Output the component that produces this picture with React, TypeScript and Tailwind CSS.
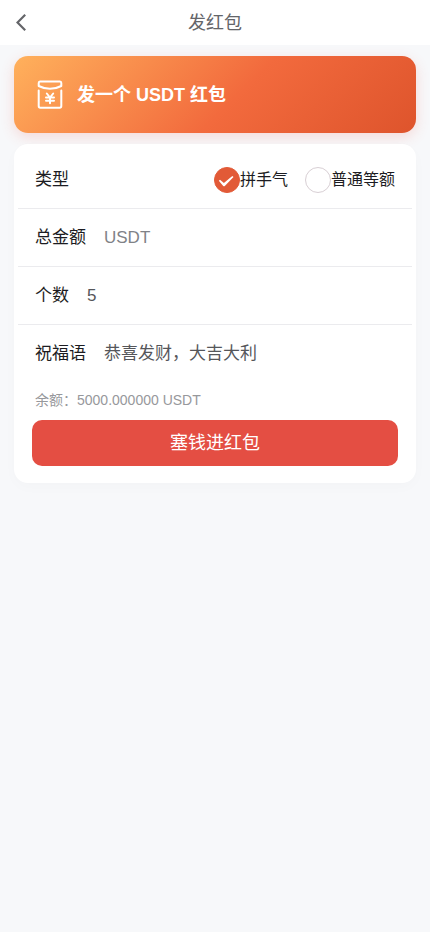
import { useState } from "react";
import type { InputHTMLAttributes } from "react";

type PacketType = "lucky" | "equal";

const TYPES: { value: PacketType; label: string }[] = [
  { value: "lucky", label: "拼手气" },
  { value: "equal", label: "普通等额" },
];

function BackIcon() {
  return (
    <svg
      viewBox="0 0 12 18"
      className="h-[18px] w-3"
      fill="none"
      stroke="currentColor"
      strokeWidth="2.2"
      aria-hidden="true"
    >
      <path d="M9.200 .8 1.500 8.500l7.700 7.700" />
    </svg>
  );
}

function PacketIcon() {
  return (
    <svg
      viewBox="0 0 26 30"
      className="h-[30px] w-[26px] shrink-0"
      fill="none"
      stroke="currentColor"
      strokeWidth="2"
      strokeLinecap="round"
      strokeLinejoin="round"
      aria-hidden="true"
    >
      <path d="M3 1.500h20q1.300 0 1.300 1.500v3Q19 8.800 13 8.800T1.700 6V3Q1.700 1.500 3 1.500Z" />
      <path d="M1.700 10.500v15.500q0 1.700 1.600 1.700h19.400q1.600 0 1.600-1.700V10.500" />
      <path d="m9.800 13.500 3.200 4 3.200-4M9 17.500h8M9 20.700h8M13 17.500v5.800" />
    </svg>
  );
}

type FieldProps = InputHTMLAttributes<HTMLInputElement> & { id: string; label: string };

function Field({ id, label, ...rest }: FieldProps) {
  return (
    <div className="flex h-[58px] items-center gap-[18px] px-[17px]">
      <label htmlFor={id} className="shrink-0 text-[#1c1c22]">
        {label}
      </label>
      <input
        id={id}
        className="min-w-0 flex-1 bg-transparent text-[#55565a] outline-none placeholder:text-[#808287]"
        {...rest}
      />
    </div>
  );
}

export default function App() {
  const [type, setType] = useState<PacketType>("lucky");
  const [amount, setAmount] = useState("");
  const [count, setCount] = useState("5");
  const [greeting, setGreeting] = useState("恭喜发财，大吉大利");

  return (
    <div className="min-h-screen bg-[#f7f8fa] font-['Liberation_Sans','Noto_Sans_CJK_SC',sans-serif]">
      <header className="grid h-[45px] grid-cols-[44px_1fr_44px] items-center bg-white text-[#646569]">
        <button type="button" aria-label="返回" className="flex h-full items-center pl-4">
          <BackIcon />
        </button>
        <h1 className="text-center text-lg leading-6">发红包</h1>
      </header>

      <main className="px-3.5 pt-[11px]">
        <section className="flex h-[77px] items-center gap-3.5 rounded-[14px] bg-[linear-gradient(135deg,#ffb15c_0%,#f26a3d_55%,#de542c_100%)] px-[23px] text-white shadow-[0_4px_14px_rgba(240,80,60,0.18)]">
          <PacketIcon />
          <h2 className="text-lg font-bold">发一个 USDT 红包</h2>
        </section>

        <form
          onSubmit={(event) => event.preventDefault()}
          className="relative mt-[11px] rounded-[14px] bg-white px-1 pt-2 pb-[17px] shadow-[0_4px_14px_rgba(0,0,0,0.02)]"
        >
          <div className="divide-y divide-[#ebebee] text-[17px] leading-6">
            <fieldset className="px-[17px]">
              <div className="flex h-14 items-center justify-between">
                <span id="type-label" className="text-[#1c1c22]">
                  类型
                </span>
                <div role="radiogroup" aria-labelledby="type-label" className="flex gap-[17px]">
                  {TYPES.map((item) => (
                    <label
                      key={item.value}
                      className="grid grid-cols-[26px_auto] items-center text-base leading-6 text-[#1c1c22]"
                    >
                      <input
                        type="radio"
                        name="type"
                        value={item.value}
                        checked={type === item.value}
                        onChange={() => setType(item.value)}
                        className="peer col-start-1 row-start-1 size-[26px] appearance-none rounded-full border border-[#d8cfd4] checked:border-[#e25a37] checked:bg-[#e25a37]"
                      />
                      <svg
                        viewBox="0 0 26 26"
                        className="pointer-events-none invisible col-start-1 row-start-1 size-[26px] text-white peer-checked:visible"
                        fill="currentColor"
                        aria-hidden="true"
                      >
                        <path d="M4.800 13.800 6 12.800l3.900 3.300L18.300 9l1.200.9-8.700 9.100q-.8.600-1.600-.1Z" />
                      </svg>
                      <span>{item.label}</span>
                    </label>
                  ))}
                </div>
              </div>
            </fieldset>
            <Field
              id="amount"
              label="总金额"
              inputMode="decimal"
              placeholder="USDT"
              value={amount}
              onChange={(event) => setAmount(event.target.value)}
            />
            <Field
              id="count"
              label="个数"
              inputMode="numeric"
              value={count}
              onChange={(event) => setCount(event.target.value)}
            />
            <Field
              id="greeting"
              label="祝福语"
              value={greeting}
              onChange={(event) => setGreeting(event.target.value)}
            />
          </div>

          <p className="mt-[7px] px-[17px] text-sm leading-5 text-[#97989c]">
            余额：5000.000000 USDT
          </p>
          <div className="mt-2.5 px-3.5">
            <button
              type="submit"
              className="h-[46px] w-full rounded-[10px] bg-[#e44e43] text-lg leading-6 text-white"
            >
              塞钱进红包
            </button>
          </div>
        </form>
      </main>
    </div>
  );
}
